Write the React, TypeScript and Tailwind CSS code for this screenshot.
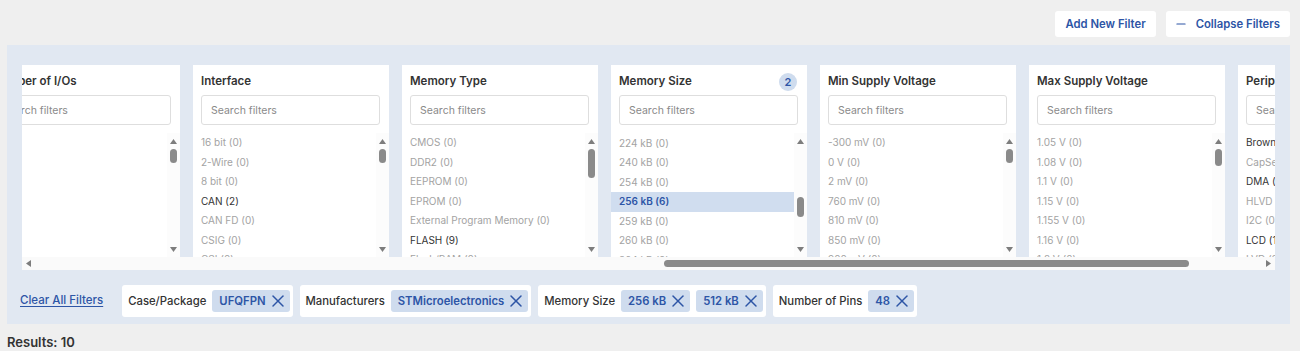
import React, { useLayoutEffect, useRef } from 'react';
import { Minus, X } from 'lucide-react';

type Item = { label: string; count: number; selected?: boolean };

interface FilterCard {
  title: string;
  badge?: number;
  items: Item[];
  scrollTop?: number;
}

const ROW_H = 19.5;
const LIST_H = 124;
const V_TRACK = 92;
const CARD_W = 196;
const CARD_GAP = 13;
const VIEW_W = 1253;
const H_TRACK = 1227;
const SCROLL_LEFT = 1501;

const zeros = (labels: string[]): Item[] => labels.map((label) => ({ label, count: 0 }));

const cards: FilterCard[] = [
  { title: 'Manufacturers', items: zeros(['Analog Devices', 'Infineon', 'Microchip', 'NXP', 'Renesas', 'STMicroelectronics', 'Texas Instruments']) },
  { title: 'Case/Package', items: zeros(['LQFP', 'QFN', 'TQFP', 'TSSOP', 'UFBGA', 'UFQFPN', 'WLCSP']) },
  { title: 'Core', items: zeros(['ARM Cortex M0', 'ARM Cortex M0+', 'ARM Cortex M3', 'ARM Cortex M4', 'ARM Cortex M7', 'ARM Cortex M33']) },
  { title: 'Data Bus Width', items: zeros(['8 bit', '16 bit', '32 bit', '64 bit']) },
  { title: 'Program Memory Size', items: zeros(['16 kB', '32 kB', '64 kB', '128 kB', '256 kB', '512 kB', '1 MB']) },
  { title: 'Max Frequency', items: zeros(['16 MHz', '32 MHz', '48 MHz', '64 MHz', '72 MHz', '80 MHz', '120 MHz']) },
  { title: 'Number of Pins', items: zeros(['20', '28', '32', '36', '44', '48', '64']) },
  { title: 'Number of I/Os', items: [] },
  {
    title: 'Interface',
    items: [
      ...zeros(['16 bit', '2-Wire', '8 bit']),
      { label: 'CAN', count: 2 },
      ...zeros(['CAN FD', 'CSIG', 'CSI', 'DALI', 'EBI/EMI', 'Ethernet', 'FlexRay', 'GPIO', 'HDMI-CEC']),
      { label: 'I2C', count: 10 },
      { label: 'I2S', count: 8 },
      ...zeros(['I3C', 'IrDA', 'JTAG', 'LIN', 'LPUART', 'MDIO', 'Microwire', 'MIPI', 'MMC', 'Quad SPI', 'SAI', 'SCI', 'SD', 'SDIO', 'SMBus', 'SPDIF']),
      { label: 'SPI', count: 10 },
      ...zeros(['SSP', 'SWD', 'SWPMI']),
      { label: 'UART', count: 4 },
      { label: 'USART', count: 10 },
      { label: 'USB', count: 6 },
      ...zeros(['USB OTG', 'USCI', 'Wi-Fi', 'Zigbee']),
    ],
  },
  {
    title: 'Memory Type',
    items: [
      ...zeros(['CMOS', 'DDR2', 'EEPROM', 'EPROM', 'External Program Memory']),
      { label: 'FLASH', count: 9 },
      ...zeros(['Flash/RAM', 'FRAM', 'MRAM', 'NOR Flash', 'OTP', 'RAM', 'ROM', 'SDRAM', 'SPI Flash']),
      { label: 'SRAM', count: 1 },
      ...zeros(['SRAM/Flash', 'Volatile', 'Non-Volatile', 'Other']),
    ],
  },
  {
    title: 'Memory Size',
    badge: 2,
    scrollTop: 292,
    items: [
      ...zeros(['1 kB', '2 kB', '4 kB', '8 kB', '12 kB', '16 kB', '24 kB', '32 kB', '48 kB', '64 kB', '96 kB', '128 kB', '144 kB', '160 kB', '192 kB']),
      ...zeros(['224 kB', '240 kB', '254 kB']),
      { label: '256 kB', count: 6, selected: true },
      ...zeros(['259 kB', '260 kB', '264 kB', '272 kB', '288 kB', '384 kB']),
      { label: '512 kB', count: 4, selected: true },
      ...zeros(['640 kB', '768 kB', '1 MB']),
    ],
  },
  {
    title: 'Min Supply Voltage',
    items: [
      ...zeros(['-300 mV', '0 V', '2 mV', '760 mV', '810 mV', '850 mV', '900 mV', '950 mV', '1 V', '1.08 V', '1.1 V', '1.2 V', '1.4 V', '1.5 V', '1.6 V', '1.62 V', '1.65 V']),
      { label: '1.7 V', count: 6 },
      ...zeros(['1.71 V', '1.72 V', '1.75 V']),
      { label: '1.8 V', count: 3 },
      ...zeros(['1.9 V', '2 V', '2.1 V', '2.2 V', '2.3 V', '2.4 V', '2.5 V', '2.6 V', '2.7 V', '2.8 V', '2.9 V', '3 V', '3.3 V', '3.6 V', '4 V', '4.5 V', '5 V', '5.5 V', '6 V', '7 V', '8 V', '9 V']),
    ],
  },
  {
    title: 'Max Supply Voltage',
    items: [
      ...zeros(['1.05 V', '1.08 V', '1.1 V', '1.15 V', '1.155 V', '1.16 V', '1.2 V', '1.26 V', '1.3 V', '1.32 V', '1.35 V', '1.5 V', '1.8 V', '1.98 V', '2 V', '2.5 V', '2.75 V', '3 V', '3.3 V']),
      { label: '3.6 V', count: 10 },
      ...zeros(['3.63 V', '4 V', '4.5 V', '5 V', '5.25 V', '5.5 V', '6 V', '6.5 V', '7 V', '10 V', '12 V', '15 V', '18 V', '20 V', '36 V']),
    ],
  },
  {
    title: 'Peripherals',
    items: [
      { label: 'Brown-out Detect/Reset', count: 10 },
      { label: 'CapSense', count: 0 },
      { label: 'DMA', count: 10 },
      { label: 'HLVD', count: 0 },
      { label: 'I2C', count: 0 },
      { label: 'LCD', count: 1 },
      ...zeros(['LVD', 'POR', 'PWM', 'WDT', 'Temp Sensor', 'Touch', 'RTC', 'TRNG', 'AES']),
    ],
  },
];

const chips: { label: string; values: string[] }[] = [
  { label: 'Case/Package', values: ['UFQFPN'] },
  { label: 'Manufacturers', values: ['STMicroelectronics'] },
  { label: 'Memory Size', values: ['256 kB', '512 kB'] },
  { label: 'Number of Pins', values: ['48'] },
];

const Arrow: React.FC<{ dir: 'up' | 'down' | 'left' | 'right' }> = ({ dir }) => {
  const pts = {
    up: '3.5,0 7,5 0,5',
    down: '0,0 7,0 3.5,5',
    left: '5,0 5,7 0,3.5',
    right: '0,0 5,3.5 0,7',
  }[dir];
  const vertical = dir === 'up' || dir === 'down';
  return (
    <svg width={vertical ? 7 : 5} height={vertical ? 5 : 7}>
      <polygon points={pts} fill="#7d7d7d" />
    </svg>
  );
};

const VScroll: React.FC<{ contentH: number; scrollTop: number }> = ({ contentH, scrollTop }) => {
  const thumb = Math.max(14, (V_TRACK * LIST_H) / contentH);
  const top = contentH > LIST_H ? ((V_TRACK - thumb) * scrollTop) / (contentH - LIST_H) : 0;
  return (
    <div className="w-[13px] shrink-0 flex flex-col bg-[#fcfcfc]">
      <div className="h-4 flex items-center justify-center">
        <Arrow dir="up" />
      </div>
      <div className="flex-1 flex flex-col items-center">
        <div style={{ height: top }} />
        <div className="w-[7px] rounded-full bg-[#8a8a8a]" style={{ height: thumb }} />
      </div>
      <div className="h-4 flex items-center justify-center">
        <Arrow dir="down" />
      </div>
    </div>
  );
};

const Card: React.FC<{ card: FilterCard }> = ({ card }) => {
  const listRef = useRef<HTMLDivElement>(null);
  const contentH = card.items.length ? card.items.length * ROW_H : 860;

  useLayoutEffect(() => {
    if (listRef.current && card.scrollTop) listRef.current.scrollTop = card.scrollTop;
  }, [card.scrollTop]);

  return (
    <div className="w-[196px] h-[192px] shrink-0 bg-white flex flex-col">
      <div className="pl-2 pr-[9px] pt-[9px]">
        <div className="h-4 flex items-center justify-between text-[11.5px] font-semibold text-[#333]">
          <span className="whitespace-nowrap">{card.title}</span>
          {card.badge !== undefined && (
            <span className="w-[18px] h-[18px] mr-px rounded-full bg-[#cfdcee] text-[#2d55a6] text-[11px] font-semibold flex items-center justify-center">
              {card.badge}
            </span>
          )}
        </div>
        <input
          placeholder="Search filters"
          className="mt-[5px] w-full h-[30px] border border-[#dedede] rounded-[3px] px-[9px] text-[10.5px] text-[#333] placeholder:text-[#8a8a8a] outline-none"
        />
      </div>
      <div className="mt-2 flex-1 flex min-h-0">
        <div ref={listRef} className="flex-1 min-w-0 overflow-hidden">
          {card.items.map((it) => (
            <div
              key={it.label}
              className={`h-[19.5px] pl-2 flex items-center whitespace-nowrap text-[10px] ${
                it.selected
                  ? 'bg-[#d0ddef] text-[#2d55a6] font-semibold'
                  : it.count > 0
                    ? 'text-[#333]'
                    : 'text-[#a3a3a3]'
              }`}
            >
              {it.label} ({it.count})
            </div>
          ))}
        </div>
        <VScroll contentH={contentH} scrollTop={card.scrollTop ?? 0} />
      </div>
    </div>
  );
};

export default function App() {
  const rowRef = useRef<HTMLDivElement>(null);

  useLayoutEffect(() => {
    if (rowRef.current) rowRef.current.scrollLeft = SCROLL_LEFT;
  }, []);

  const contentW = cards.length * CARD_W + (cards.length - 1) * CARD_GAP + 16;
  const thumbW = (H_TRACK * VIEW_W) / contentW;
  const thumbLeft = ((H_TRACK - thumbW) * SCROLL_LEFT) / (contentW - VIEW_W);

  return (
    <div className="min-h-screen bg-[#efefef] font-['Inter','Noto_Sans',sans-serif] text-[#333]">
      {/* top actions */}
      <div className="flex justify-end gap-[10px] pt-[11px] pr-[10px]">
        <button className="h-[26px] px-[10px] bg-white rounded-[3px] text-[11.3px] font-semibold text-[#2d55a6]">
          Add New Filter
        </button>
        <button className="h-[26px] pl-2 pr-[10px] bg-white rounded-[3px] text-[11.3px] font-semibold text-[#2d55a6] flex items-center gap-2">
          <Minus size={14} strokeWidth={2} />
          Collapse Filters
        </button>
      </div>

      {/* filter panel */}
      <div className="ml-[7px] mr-[10px] mt-2 bg-[#e1e8f2] px-[15px] pt-5 pb-[7px]">
        <div ref={rowRef} className="flex gap-[13px] overflow-hidden">
          {cards.map((c) => (
            <Card key={c.title} card={c} />
          ))}
        </div>
        {/* horizontal scrollbar */}
        <div className="h-[13px] flex bg-[#fafafa]">
          <div className="w-[13px] flex items-center justify-center">
            <Arrow dir="left" />
          </div>
          <div className="flex-1 flex items-center">
            <div style={{ width: thumbLeft }} />
            <div className="h-[7px] rounded-full bg-[#8a8a8a]" style={{ width: thumbW }} />
          </div>
          <div className="w-[13px] flex items-center justify-center">
            <Arrow dir="right" />
          </div>
        </div>

        <div className="mt-[15px] flex items-center gap-[7px]">
          <a href="#" className="-ml-0.5 mr-3 text-[11.5px] font-medium text-[#2d55a6] underline underline-offset-2">
            Clear All Filters
          </a>
          {chips.map((g) => (
            <div key={g.label} className="h-8 bg-white rounded-[3px] pl-1.5 pr-[3px] flex items-center gap-1.5">
              <span className="text-[11.3px] font-medium text-[#333] whitespace-nowrap">{g.label}</span>
              {g.values.map((v) => (
                <span
                  key={v}
                  className="h-[22px] pl-[7px] pr-[7px] bg-[#cfdcee] rounded-[3px] flex items-center gap-[7px] text-[11.3px] font-semibold text-[#2d55a6] whitespace-nowrap"
                >
                  {v}
                  <X size={20} strokeWidth={1.8} className="-m-[5px]" />
                </span>
              ))}
            </div>
          ))}
        </div>
      </div>

      <div className="pl-[7px] mt-[9px] text-[13px] font-semibold text-[#333]">Results: 10</div>
    </div>
  );
}
